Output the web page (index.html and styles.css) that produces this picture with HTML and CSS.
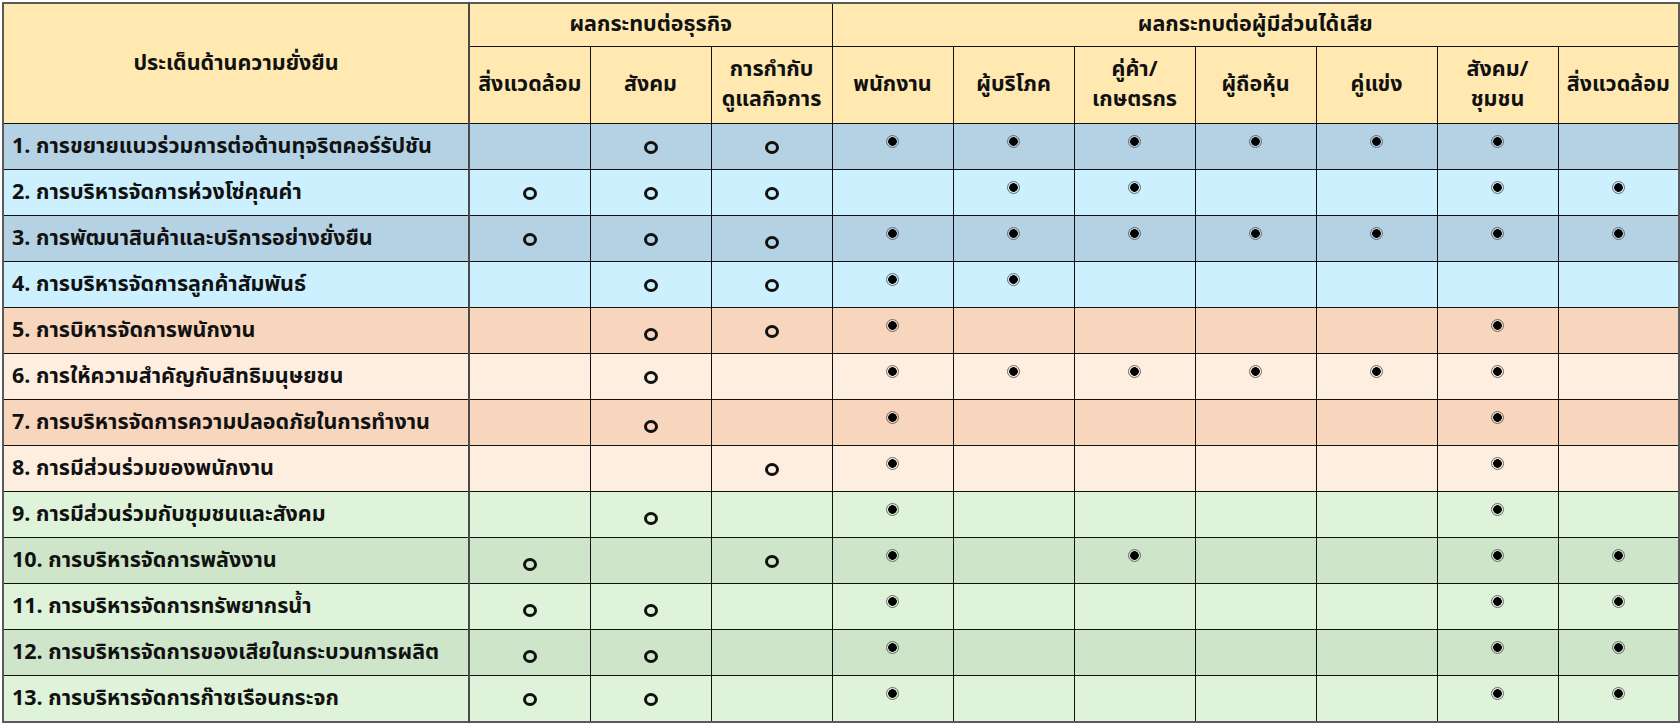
FILE: index.html
```html
<!DOCTYPE html>
<html lang="th">
<head>
<meta charset="utf-8">
<title>ประเด็นด้านความยั่งยืน</title>
<link rel="stylesheet" href="styles.css">
</head>
<body>
<table class="matrix">
  <colgroup>
    <col class="c-topic">
    <col class="c-mark"><col class="c-mark"><col class="c-mark">
    <col class="c-mark"><col class="c-mark"><col class="c-mark"><col class="c-mark"><col class="c-mark"><col class="c-mark"><col class="c-mark">
  </colgroup>
  <thead>
    <tr class="h1">
      <th rowspan="2" class="topic-h">ประเด็นด้านความยั่งยืน</th>
      <th colspan="3">ผลกระทบต่อธุรกิจ</th>
      <th colspan="7">ผลกระทบต่อผู้มีส่วนได้เสีย</th>
    </tr>
    <tr class="h2">
      <th>สิ่งแวดล้อม</th>
      <th>สังคม</th>
      <th>การกำกับ<br>ดูแลกิจการ</th>
      <th>พนักงาน</th>
      <th>ผู้บริโภค</th>
      <th>คู่ค้า/<br>เกษตรกร</th>
      <th>ผู้ถือหุ้น</th>
      <th>คู่แข่ง</th>
      <th>สังคม/<br>ชุมชน</th>
      <th>สิ่งแวดล้อม</th>
    </tr>
  </thead>
  <tbody>
    <tr class="blue">
      <td class="topic">1. การขยายแนวร่วมการต่อต้านทุจริตคอร์รัปชัน</td>
      <td></td><td><span class="ring"></span></td><td><span class="ring"></span></td>
      <td><span class="eye"></span></td><td><span class="eye"></span></td><td><span class="eye"></span></td><td><span class="eye"></span></td><td><span class="eye"></span></td><td><span class="eye"></span></td><td></td>
    </tr>
    <tr class="cyan">
      <td class="topic">2. การบริหารจัดการห่วงโซ่คุณค่า</td>
      <td><span class="ring"></span></td><td><span class="ring"></span></td><td><span class="ring"></span></td>
      <td></td><td><span class="eye"></span></td><td><span class="eye"></span></td><td></td><td></td><td><span class="eye"></span></td><td><span class="eye"></span></td>
    </tr>
    <tr class="blue">
      <td class="topic">3. การพัฒนาสินค้าและบริการอย่างยั่งยืน</td>
      <td><span class="ring"></span></td><td><span class="ring"></span></td><td><span class="ring low"></span></td>
      <td><span class="eye"></span></td><td><span class="eye"></span></td><td><span class="eye"></span></td><td><span class="eye"></span></td><td><span class="eye"></span></td><td><span class="eye"></span></td><td><span class="eye"></span></td>
    </tr>
    <tr class="cyan">
      <td class="topic">4. การบริหารจัดการลูกค้าสัมพันธ์</td>
      <td></td><td><span class="ring"></span></td><td><span class="ring"></span></td>
      <td><span class="eye"></span></td><td><span class="eye"></span></td><td></td><td></td><td></td><td></td><td></td>
    </tr>
    <tr class="peach">
      <td class="topic">5. การบิหารจัดการพนักงาน</td>
      <td></td><td><span class="ring low"></span></td><td><span class="ring"></span></td>
      <td><span class="eye"></span></td><td></td><td></td><td></td><td></td><td><span class="eye"></span></td><td></td>
    </tr>
    <tr class="cream">
      <td class="topic">6. การให้ความสำคัญกับสิทธิมนุษยชน</td>
      <td></td><td><span class="ring"></span></td><td></td>
      <td><span class="eye"></span></td><td><span class="eye"></span></td><td><span class="eye"></span></td><td><span class="eye"></span></td><td><span class="eye"></span></td><td><span class="eye"></span></td><td></td>
    </tr>
    <tr class="peach">
      <td class="topic">7. การบริหารจัดการความปลอดภัยในการทำงาน</td>
      <td></td><td><span class="ring low"></span></td><td></td>
      <td><span class="eye"></span></td><td></td><td></td><td></td><td></td><td><span class="eye"></span></td><td></td>
    </tr>
    <tr class="cream">
      <td class="topic">8. การมีส่วนร่วมของพนักงาน</td>
      <td></td><td></td><td><span class="ring"></span></td>
      <td><span class="eye"></span></td><td></td><td></td><td></td><td></td><td><span class="eye"></span></td><td></td>
    </tr>
    <tr class="mint">
      <td class="topic">9. การมีส่วนร่วมกับชุมชนและสังคม</td>
      <td></td><td><span class="ring low"></span></td><td></td>
      <td><span class="eye"></span></td><td></td><td></td><td></td><td></td><td><span class="eye"></span></td><td></td>
    </tr>
    <tr class="sage">
      <td class="topic">10. การบริหารจัดการพลังงาน</td>
      <td><span class="ring low"></span></td><td></td><td><span class="ring"></span></td>
      <td><span class="eye"></span></td><td></td><td><span class="eye"></span></td><td></td><td></td><td><span class="eye"></span></td><td><span class="eye"></span></td>
    </tr>
    <tr class="mint">
      <td class="topic">11. การบริหารจัดการทรัพยากรน้ำ</td>
      <td><span class="ring low"></span></td><td><span class="ring low"></span></td><td></td>
      <td><span class="eye"></span></td><td></td><td></td><td></td><td></td><td><span class="eye"></span></td><td><span class="eye"></span></td>
    </tr>
    <tr class="sage">
      <td class="topic">12. การบริหารจัดการของเสียในกระบวนการผลิต</td>
      <td><span class="ring low"></span></td><td><span class="ring low"></span></td><td></td>
      <td><span class="eye"></span></td><td></td><td></td><td></td><td></td><td><span class="eye"></span></td><td><span class="eye"></span></td>
    </tr>
    <tr class="mint">
      <td class="topic">13. การบริหารจัดการก๊าซเรือนกระจก</td>
      <td><span class="ring"></span></td><td><span class="ring"></span></td><td></td>
      <td><span class="eye"></span></td><td></td><td></td><td></td><td></td><td><span class="eye"></span></td><td><span class="eye"></span></td>
    </tr>
  </tbody>
</table>
</body>
</html>
```

FILE: styles.css
```css
html, body {
  margin: 0;
  padding: 0;
  background: #ffffff;
}

body {
  padding: 2px 0 0 2px;
  font-family: "Noto Sans Thai", "Noto Sans Thai UI", "Kanit", "Prompt", "Noto Sans", "DejaVu Sans", sans-serif;
  font-weight: 700;
  color: #111111;
}

.matrix {
  border-collapse: collapse;
  table-layout: fixed;
  width: 1676px;
  border: 2px solid #5a5a5a;
}

.c-topic { width: 466px; }
.c-mark { width: 121px; }

.matrix th,
.matrix td {
  border: 1px solid #111111;
  padding: 0;
  text-align: center;
  vertical-align: middle;
}

.matrix th {
  background: #ffe9b1;
  font-size: 21.5px;
  line-height: 30px;
  font-weight: 700;
}

.h1 th { height: 42px; }
.h2 th { height: 76px; }

.matrix .topic-h { border-right: 2px solid #4a4a4a; }

.matrix td { height: 45px; }

.matrix td.topic {
  text-align: left;
  padding-left: 8px;
  font-size: 21.5px;
  white-space: nowrap;
  border-right: 2px solid #4a4a4a;
}

.blue td { background: #b4d2e4; }
.cyan td { background: #ccf0fe; }
.peach td { background: #f7d6bd; }
.cream td { background: #fdeedf; }
.mint td { background: #def3d9; }
.sage td { background: #cee5ca; }

.ring {
  display: inline-block;
  width: 8px;
  height: 7px;
  border: 3px solid #111111;
  border-radius: 50%;
  position: relative;
  top: 2px;
}

.ring.low { top: 5px; }

.eye {
  display: inline-block;
  width: 11px;
  height: 11px;
  border: 1px solid #6a6a6a;
  border-radius: 50%;
  position: relative;
  top: -4px;
  background: radial-gradient(circle, #000000 0 4px, transparent 4.6px);
}
```
